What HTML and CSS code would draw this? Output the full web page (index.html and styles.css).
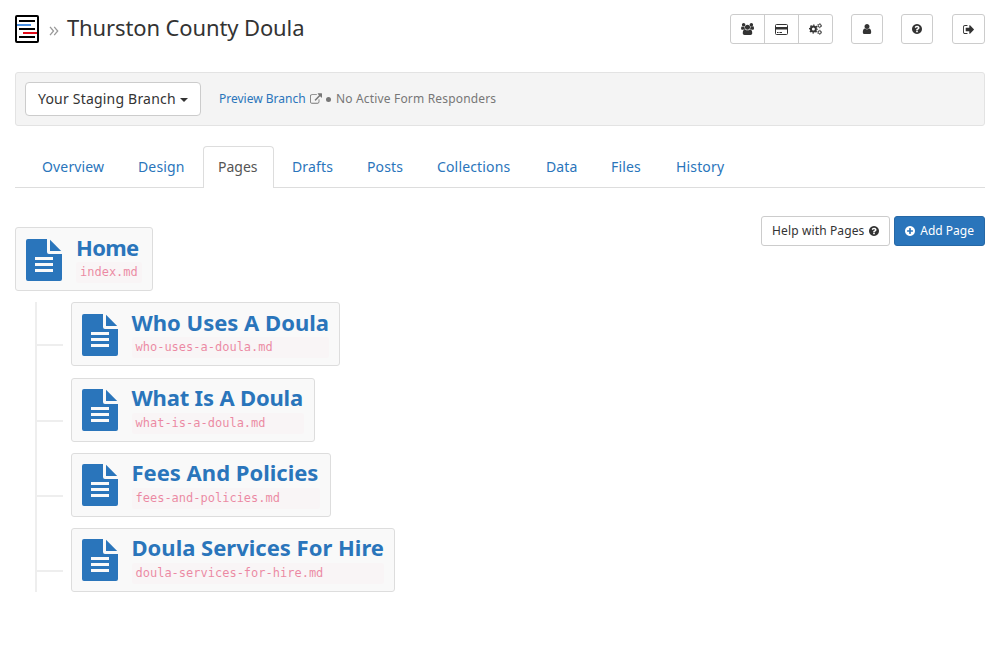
FILE: index.html
```html
<!DOCTYPE html>
<html lang="en">
<head>
<meta charset="utf-8">
<title>Thurston County Doula</title>
<link rel="stylesheet" href="styles.css">
</head>
<body>
<svg class="defs" width="0" height="0">
  <symbol id="users" viewBox="64 0 1920 1792"><path d="M657 896q-162 5-265 128h-134q-82 0-138-40.5t-56-118.5q0-353 124-353 6 0 43.5 21t97.5 42.5 119 21.5q67 0 133-23-5 37-5 66 0 159 93 293zm1071 637q0 120-73 189.500t-194 69.500h-874q-121 0-194-69.500t-73-189.500q0-53 3.500-103.500t14-109 26.500-108.500 43-97.500 62-81 85.500-53.500 111.500-20q10 0 43 21.500t73 48 107 48 135 21.500 135-21.500 107-48 73-48 43-21.500q61 0 111.500 20t85.500 53.500 62 81 43 97.500 26.500 108.500 14 109 3.500 103.500zm-1024-1277q0 106-75 181t-181 75-181-75-75-181 75-181 181-75 181 75 75 181zm704 384q0 159-112.500 271.500t-271.500 112.500-271.500-112.500-112.500-271.500 112.500-271.500 271.500-112.500 271.500 112.500 112.500 271.500zm576 225q0 78-56 118.500t-138 40.500h-134q-103-123-265-128 93-134 93-293 0-29-5-66 66 23 133 23 59 0 119-21.500t97.500-42.500 43.500-21q124 0 124 353zm-128-609q0 106-75 181t-181 75-181-75-75-181 75-181 181-75 181 75 75 181z"/></symbol>
  <symbol id="question" viewBox="128 128 1536 1536"><path d="M1024 1376v-192q0-14-9-23t-23-9h-192q-14 0-23 9t-9 23v192q0 14 9 23t23 9h192q14 0 23-9t9-23zm256-672q0-88-55.500-163t-138.500-116-170-41q-243 0-371 213-15 24 8 42l132 100q7 6 19 6 16 0 25-12 53-68 86-92 34-24 86-24 48 0 85.500 26t37.500 59q0 38-20 61t-68 45q-63 28-115.500 86.500t-52.500 125.500v36q0 14 9 23t23 9h192q14 0 23-9t9-23q0-19 21.500-49.500t54.500-49.500q32-18 49-28.500t46-35 44.500-48 28-60.500 12.500-81zm384 192q0 209-103 385.500t-279.500 279.500-385.500 103-385.500-103-279.500-279.500-103-385.500 103-385.500 279.500-279.500 385.500-103 385.500 103 279.500 279.500 103 385.500z"/></symbol>
  <symbol id="plus" viewBox="128 128 1536 1536"><path d="M1344 960v-128q0-26-19-45t-45-19h-256v-256q0-26-19-45t-45-19h-128q-26 0-45 19t-19 45v256h-256q-26 0-45 19t-19 45v128q0 26 19 45t45 19h256v256q0 26 19 45t45 19h128q26 0 45-19t19-45v-256h256q26 0 45-19t19-45zm320-64q0 209-103 385.500t-279.500 279.500-385.500 103-385.500-103-279.500-279.500-103-385.500 103-385.500 279.500-279.500 385.500-103 385.500 103 279.500 279.500 103 385.500z"/></symbol>
  <symbol id="user" viewBox="256 128 1280 1536"><path d="M1536 1399q0 109-62.500 187t-150.500 78h-854q-88 0-150.500-78t-62.500-187q0-85 8.500-160.500t31.500-152 58.500-131 94-89 134.500-34.500q131 128 313 128t313-128q76 0 134.500 34.500t94 89 58.500 131 31.500 152 8.500 160.500zm-256-887q0 159-112.500 271.500t-271.500 112.500-271.500-112.500-112.500-271.500 112.500-271.500 271.500-112.500 271.500 112.500 112.500 271.500z"/></symbol>
  <symbol id="signout" viewBox="64 256 1568 1280"><path d="M704 1440q0 4 1 20t.5 26.500-3 23.500-10 19.500-20.500 6.500h-320q-119 0-203.500-84.500t-84.500-203.500v-704q0-119 84.500-203.500t203.500-84.500h320q13 0 22.500 9.500t9.500 22.500q0 4 1 20t.5 26.500-3 23.500-10 19.500-20.500 6.500h-320q-66 0-113 47t-47 113v704q0 66 47 113t113 47h312l11.500 1 11.500 3 8 5.500 7 9 2 13.500zm928-544q0 26-19 45l-544 544q-19 19-45 19t-45-19-19-45v-288h-448q-26 0-45-19t-19-45v-384q0-26 19-45t45-19h448v-288q0-26 19-45t45-19 45 19l544 544q19 19 19 45z"/></symbol>
  <symbol id="external" viewBox="0 0 1792 1536"><path d="M1408 928v320q0 119-84.500 203.500t-203.500 84.500h-832q-119 0-203.500-84.500t-84.500-203.500v-832q0-119 84.500-203.500t203.500-84.500h704q14 0 23 9t9 23v64q0 14-9 23t-23 9h-704q-66 0-113 47t-47 113v832q0 66 47 113t113 47h832q66 0 113-47t47-113v-320q0-14 9-23t23-9h64q14 0 23 9t9 23zm384-864v512q0 26-19 45t-45 19-45-19l-176-176-652 652q-10 10-23 10t-23-10l-114-114q-10-10-10-23t10-23l652-652-176-176q-19-19-19-45t19-45 45-19h512q26 0 45 19t19 45z"/></symbol>
  <symbol id="card" viewBox="0 0 13 11"><rect x=".5" y=".5" width="12" height="10" rx="1" fill="none" stroke="currentColor"/><path d="M0 3h13v2.600H0zM2 8h1.600v1H2zM4.400 8h2.600v1H4.400z"/></symbol>
  <symbol id="cogs" viewBox="0 0 13 12"><g fill="none" stroke="currentColor"><circle cx="4.400" cy="6" r="2.500" stroke-width="2"/><circle cx="4.400" cy="6" r="3.900" stroke-width="1.200" stroke-dasharray="1.530 1.530" stroke-dashoffset=".76"/><circle cx="10.600" cy="2.700" r="1.400" stroke-width="1"/><circle cx="10.600" cy="2.700" r="2.100" stroke-width=".7" stroke-dasharray="1.100 1.100"/><circle cx="10.600" cy="9.300" r="1.400" stroke-width="1"/><circle cx="10.600" cy="9.300" r="2.100" stroke-width=".7" stroke-dasharray="1.100 1.100"/></g></symbol>
  <symbol id="file" viewBox="0 0 36 42"><path fill-rule="evenodd" d="M2 0H21V13Q21 15 23 15H36V40Q36 42 34 42H2Q0 42 0 40V2Q0 0 2 0ZM9 18V21H27V18ZM9 24V27H27V24ZM9 30V33H27V30Z"/><path d="M24 .8L35.200 12H24Z"/></symbol>
</svg>
<header class="header">
  <svg class="logo" viewBox="0 0 24 28"><rect x="1" y="1" width="22" height="26" rx="1" fill="#fff" stroke="#000" stroke-width="2"/><path d="M4 6H20M4 14H20M4 22H20" stroke="#000" stroke-width="2"/><path d="M2 10H16" stroke="#4a90e2" stroke-width="2"/><path d="M8 18H22" stroke="#e20a17" stroke-width="2"/></svg>
  <svg class="chevrons" viewBox="0 0 10 10"><path d="M1 .8L4.500 5L1 9.200M5.200 .8L8.700 5L5.200 9.200" fill="none" stroke="#999" stroke-width="1.300"/></svg>
  <h1 class="title">Thurston County Doula</h1>
  <nav class="tools">
    <div class="group">
      <a class="tool"><svg class="icon users"><use href="#users"/></svg></a>
      <a class="tool"><svg class="icon card-icon"><use href="#card"/></svg></a>
      <a class="tool"><svg class="icon cogs"><use href="#cogs"/></svg></a>
    </div>
    <a class="tool single"><svg class="icon user"><use href="#user"/></svg></a>
    <a class="tool single"><svg class="icon round"><use href="#question"/></svg></a>
    <a class="tool single last"><svg class="icon signout"><use href="#signout"/></svg></a>
  </nav>
</header>
<section class="branch-bar">
  <a class="branch-button"><span>Your Staging Branch</span><i class="caret"></i></a>
  <a class="preview">Preview Branch</a>
  <svg class="icon external"><use href="#external"/></svg>
  <i class="dot"></i>
  <span class="responders">No Active Form Responders</span>
</section>
<nav class="tabs">
  <a class="tab">Overview</a>
  <a class="tab">Design</a>
  <a class="tab active">Pages</a>
  <a class="tab">Drafts</a>
  <a class="tab">Posts</a>
  <a class="tab">Collections</a>
  <a class="tab">Data</a>
  <a class="tab">Files</a>
  <a class="tab">History</a>
</nav>
<main class="content">
  <div class="tree">
    <a class="page home"><svg class="file"><use href="#file"/></svg><span class="info"><b class="name">Home</b><code class="path">index.md</code></span></a>
    <div class="children">
      <a class="page who"><svg class="file"><use href="#file"/></svg><span class="info"><b class="name">Who Uses A Doula</b><code class="path">who-uses-a-doula.md</code></span></a>
      <a class="page what"><svg class="file"><use href="#file"/></svg><span class="info"><b class="name">What Is A Doula</b><code class="path">what-is-a-doula.md</code></span></a>
      <a class="page fees"><svg class="file"><use href="#file"/></svg><span class="info"><b class="name">Fees And Policies</b><code class="path">fees-and-policies.md</code></span></a>
      <a class="page services"><svg class="file"><use href="#file"/></svg><span class="info"><b class="name">Doula Services For Hire</b><code class="path">doula-services-for-hire.md</code></span></a>
    </div>
  </div>
  <div class="actions">
    <a class="button help"><span>Help with Pages</span><svg class="icon round"><use href="#question"/></svg></a>
    <a class="button primary"><svg class="icon round"><use href="#plus"/></svg><span>Add Page</span></a>
  </div>
</main>
</body>
</html>
```
FILE: styles.css
```css
* { box-sizing: border-box; }
body { margin: 0; padding: 14px 15px 0; background: #fff; color: #333; font: 14px/20px "Noto Sans", "Open Sans", sans-serif; }
a { color: #2a75bb; white-space: nowrap; }
svg { display: block; flex: none; }
.defs { display: none; }
.icon { fill: currentColor; color: #333; }
.round { width: 10px; height: 10px; }

.header { display: flex; height: 30px; }
.logo { width: 24px; height: 28px; margin-top: 1px; }
.chevrons { width: 10px; height: 10px; margin: 12px 0 0 10px; }
.title { margin: 0 0 0 8px; font-size: 22px; line-height: 26px; font-weight: 400; letter-spacing: -.12px; white-space: nowrap; }
.tools { display: flex; margin-left: auto; }
.group { display: flex; width: 103px; height: 30px; border: 1px solid #ccc; border-radius: 3px; }
.tool { display: flex; flex: 1; align-items: center; justify-content: center; }
.tool + .tool { border-left: 1px solid #ccc; }
.tools .single { flex: none; width: 32px; height: 30px; margin-left: 18px; border: 1px solid #ccc; border-radius: 3px; }
.tools .last { width: 33px; margin-left: 19px; }
.users { width: 13px; height: 12px; }
.card-icon { width: 13px; height: 11px; }
.cogs { width: 13px; height: 12px; }
.user { width: 10px; height: 10px; }
.signout { width: 11px; height: 9px; }

.branch-bar { display: flex; align-items: center; height: 54px; margin-top: 28px; padding: 0 9px; background: #f4f4f4; border: 1px solid #e3e3e3; border-radius: 3px; font-size: 12px; color: #777; }
.branch-button { display: flex; align-items: center; justify-content: space-between; width: 176px; height: 34px; padding: 0 12px; background: #fff; border: 1px solid #ccc; border-radius: 4px; font-size: 14px; letter-spacing: .2px; color: #333; }
.caret { border: 4px solid transparent; border-top-color: #333; border-bottom: 0; margin-top: 2px; }
.preview { width: 87px; margin-left: 18px; }
.external { width: 12px; height: 11px; margin: -2px 0 0 4px; color: #777; }
.dot { width: 5px; height: 5px; margin: 1px 5px 0 4px; border-radius: 50%; background: #777; }
.responders { letter-spacing: .17px; }

.tabs { display: grid; grid-template-columns: 96px 77px 77px 75px 70px 109px 65px 65px 80px; height: 42px; margin-top: 20px; padding-left: 11px; border-bottom: 1px solid #ddd; letter-spacing: .15px; }
.tab { height: 42px; padding: 11px 0 0 16px; }
.tab.active { width: 71px; margin-left: 4px; padding: 10px 0 0 14px; border: 1px solid #ddd; border-bottom: 0; border-radius: 4px 4px 0 0; background: #fff; color: #555; letter-spacing: 0; }

.content { display: flex; justify-content: space-between; align-items: flex-start; }
.tree { padding-top: 39px; }
.page { display: flex; width: 138px; height: 64px; padding: 11px 10px 0; background: #f9f9f9; border: 1px solid #ddd; border-radius: 3px; position: relative; }
.file { width: 36px; height: 42px; fill: #2a75bb; }
.info { display: flex; flex-direction: column; flex: 1; min-width: 0; margin-left: 14px; }
.name { height: 26px; margin-top: -3px; font-size: 22px; line-height: 22px; font-weight: 700; }
.path { height: 21px; padding: 0 4px; background: #f9f2f4; color: #e0184f; border-radius: 3px; opacity: .5; font: 12px/21px "DejaVu Sans Mono", monospace; }
.children { margin: 11px 0 0 20px; padding-left: 34px; border-left: 2px solid #eee; }
.children .page::before { content: ""; position: absolute; left: -35px; top: 41px; width: 26px; height: 2px; background: #eee; }
.children .info { margin-left: 13.500px; }
.children .page + .page { margin-top: 11px; padding-top: 10px; }
.children .page + .page .name { height: 27px; }
.children .who + .what { margin-top: 12px; }
.home .name { letter-spacing: -.7px; }
.who { width: 269px; }
.what { width: 244px; }
.what .name { letter-spacing: -.18px; }
.fees { width: 260px; }
.services { width: 324px; }

.actions { display: flex; gap: 4px; margin-top: 28px; }
.button { display: flex; align-items: center; justify-content: space-between; height: 30px; padding: 0 10px; border: 1px solid #ccc; border-radius: 3px; font-size: 12px; }
.help { width: 129px; color: #333; letter-spacing: .13px; }
.primary { width: 91px; background: #2a75bb; border-color: #2668a6; color: #fff; }
.primary .icon { color: #fff; }
```
